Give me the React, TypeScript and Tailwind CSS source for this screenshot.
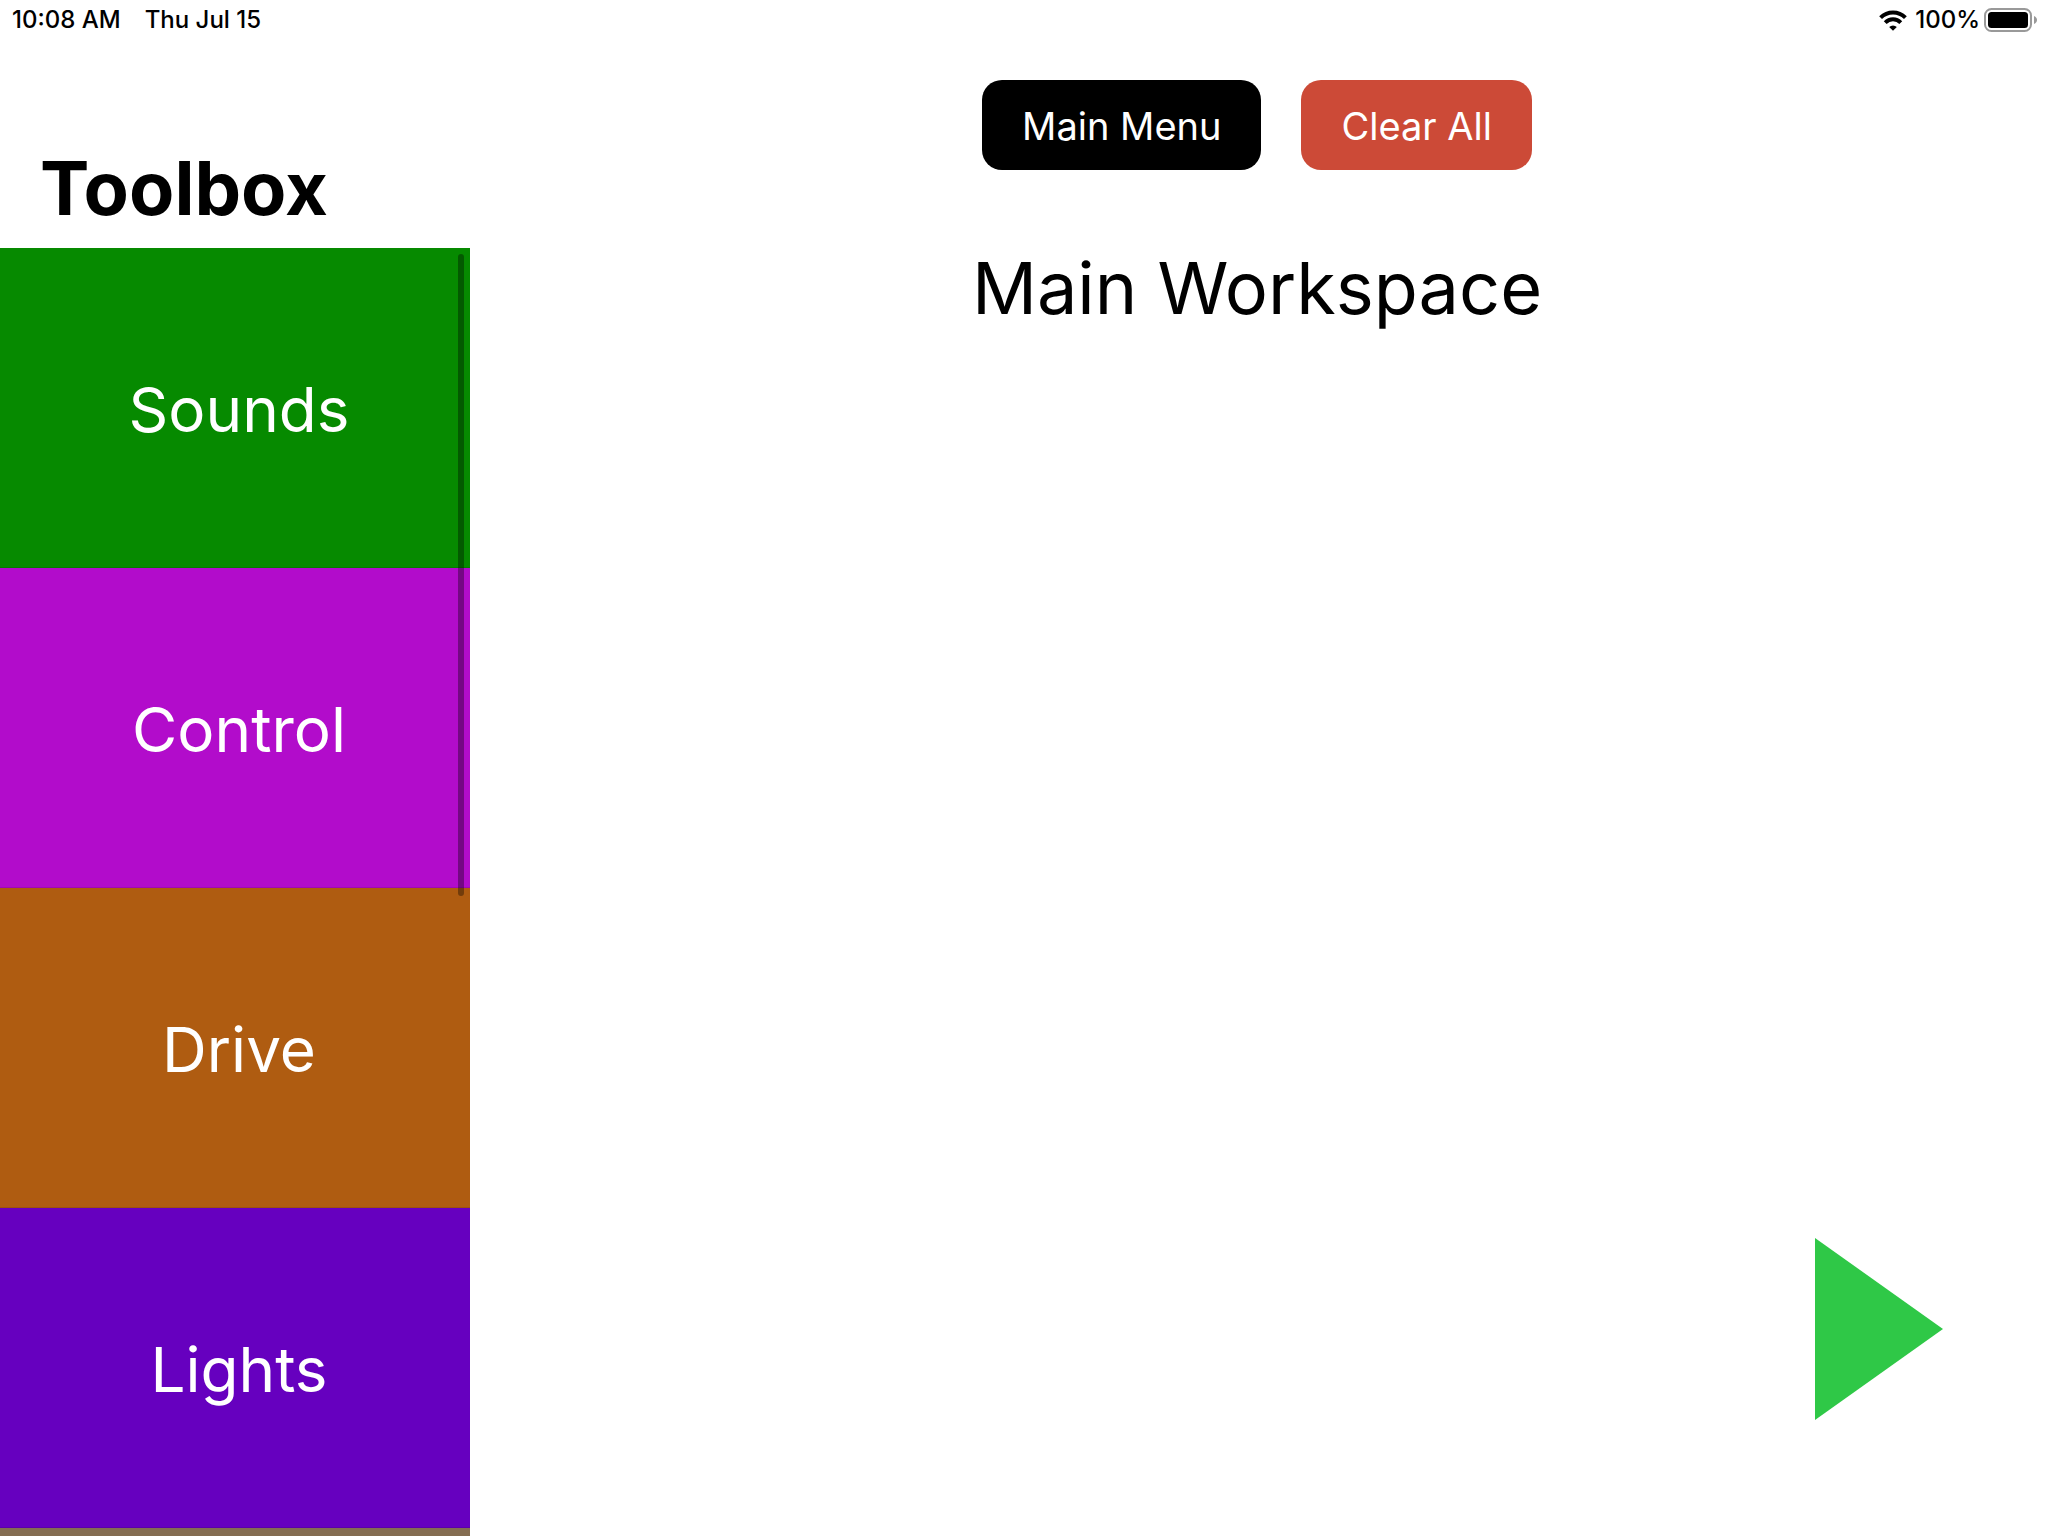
const categories = [
  { name: 'Sounds', color: 'bg-[#068a00]' },
  { name: 'Control', color: 'bg-[#b20ccb]' },
  { name: 'Drive', color: 'bg-[#af5c11]' },
  { name: 'Lights', color: 'bg-[#6600bf]' },
];

function WifiIcon() {
  return (
    <svg viewBox="0 0 28 21" className="h-[21px] w-7" aria-hidden="true">
      <g fill="none" stroke="#000" strokeWidth="4">
        <path d="M1.6 7.6 A17.6 17.6 0 0 1 26.4 7.6" />
        <path d="M6.2 12.6 A11 11 0 0 1 21.8 12.6" />
      </g>
      <path d="M14 20.8 L10.2 17 A5.4 5.4 0 0 1 17.8 17 Z" fill="#000" />
    </svg>
  );
}

function BatteryIcon() {
  return (
    <svg viewBox="0 0 54 24" className="h-6 w-[54px]" aria-hidden="true">
      <rect x="1" y="1" width="46" height="22" rx="6.5" fill="none" stroke="#999" strokeWidth="2" />
      <rect x="4" y="4" width="40" height="16" rx="3.5" fill="#000" />
      <path d="M50 8 C54 9.5 54 14.5 50 16 Z" fill="#999" />
    </svg>
  );
}

function StatusBar() {
  return (
    <header className="flex h-10 shrink-0 items-center justify-between pl-3 pr-2.5 text-2xl font-medium">
      <div className="flex gap-6">
        <span>10:08 AM</span>
        <span>Thu Jul 15</span>
      </div>
      <div className="flex items-center gap-2">
        <WifiIcon />
        <div className="flex items-center gap-1">
          <span>100%</span>
          <BatteryIcon />
        </div>
      </div>
    </header>
  );
}

function Toolbox() {
  return (
    <aside className="flex w-[470px] shrink-0 flex-col">
      <h1 className="flex h-52 items-end px-10 pb-3 text-[74px] leading-[96px] font-bold">Toolbox</h1>
      <div className="relative min-h-0 flex-1 overflow-hidden">
        <nav className="flex flex-col" aria-label="Toolbox categories">
          {categories.map(({ name, color }) => (
            <button
              key={name}
              type="button"
              className={`h-80 border-b border-black/10 pt-1 pl-2 text-[62px] text-white ${color}`}
            >
              {name}
            </button>
          ))}
          <div className="h-80 bg-[#846d52]" />
        </nav>
        <div className="absolute top-1.5 right-1.5 h-[642px] w-1.5 rounded-full bg-black/35" />
      </div>
    </aside>
  );
}

function Workspace() {
  return (
    <main className="flex flex-1 flex-col items-center pt-10 pr-1">
      <div className="flex gap-10 text-[38px] text-white">
        <button type="button" className="h-[90px] rounded-[20px] bg-black px-10 pt-0.5">
          Main Menu
        </button>
        <button type="button" className="h-[90px] rounded-[20px] bg-[#cc4a37] px-10 pt-0.5">
          Clear All
        </button>
      </div>
      <h2 className="mt-[70px] text-7xl leading-[96px]">Main Workspace</h2>
      <button type="button" aria-label="Run program" className="mt-auto mr-[101px] mb-[116px] self-end">
        <svg viewBox="0 0 128 182" className="h-[182px] w-32" aria-hidden="true">
          <path d="M0 0 L128 91 L0 182 Z" fill="#2fc847" />
        </svg>
      </button>
    </main>
  );
}

export default function App() {
  return (
    <div className="flex h-screen flex-col overflow-hidden bg-white font-['Inter',sans-serif] text-black">
      <StatusBar />
      <div className="flex min-h-0 flex-1">
        <Toolbox />
        <Workspace />
      </div>
    </div>
  );
}
